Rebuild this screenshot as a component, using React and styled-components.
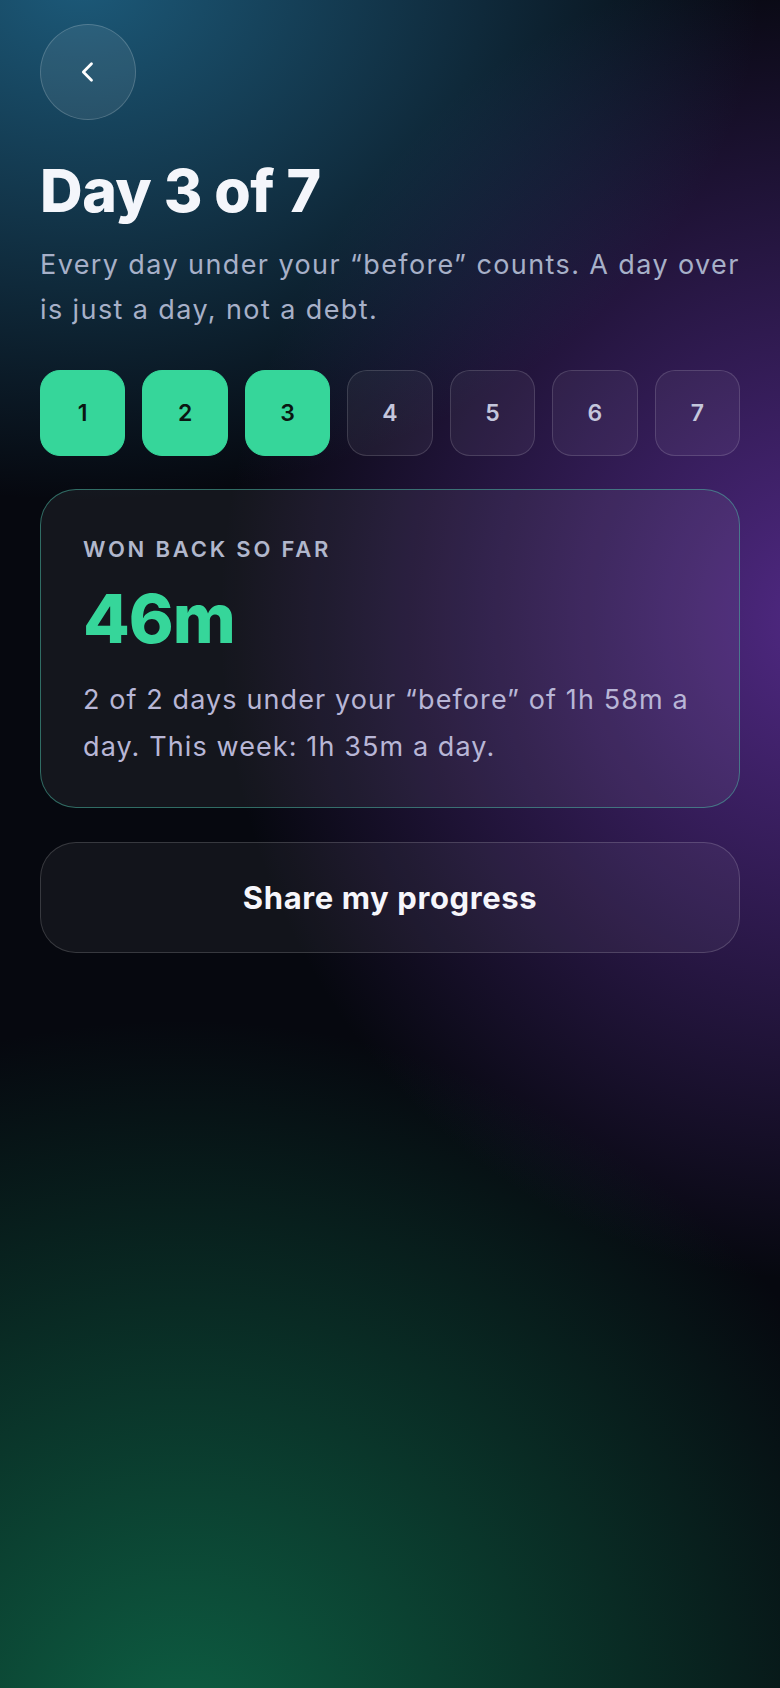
import React from 'react';
import styled, { createGlobalStyle } from 'styled-components';

const GlobalStyle = createGlobalStyle`
  html, body {
    margin: 0;
    padding: 0;
    background: #06080f;
  }
  * {
    box-sizing: border-box;
  }
`;

const Page = styled.div`
  position: relative;
  min-height: 1688px;
  width: 100%;
  padding: 24px 40px 40px;
  font-family: Inter, "Noto Sans", sans-serif;
  color: #fff;
  background:
    radial-gradient(ellipse 680px 520px at 80px -20px, rgba(32, 104, 140, 0.85), rgba(32, 104, 140, 0) 100%),
    radial-gradient(ellipse 600px 660px at 820px 620px, rgba(88, 44, 144, 0.9), rgba(88, 44, 144, 0) 100%),
    radial-gradient(ellipse 760px 720px at 180px 1740px, rgba(14, 100, 70, 0.95), rgba(14, 100, 70, 0) 100%),
    #06080f;
`;

const BackButton = styled.button`
  width: 96px;
  height: 96px;
  border-radius: 50%;
  border: 1.5px solid rgba(255, 255, 255, 0.18);
  background: rgba(255, 255, 255, 0.08);
  display: flex;
  align-items: center;
  justify-content: center;
  padding: 0;
  cursor: pointer;
`;

const Title = styled.h1`
  margin: 38px 0 0;
  font-size: 59px;
  font-weight: 800;
  letter-spacing: -0.5px;
  line-height: 66px;
  color: #f4f6fb;
`;

const Subtitle = styled.p`
  margin: 18px 0 0;
  font-size: 27px;
  letter-spacing: 1.4px;
  line-height: 45px;
  color: #a7b0c8;
  font-weight: 400;
`;

const Days = styled.div`
  display: grid;
  grid-template-columns: repeat(7, 1fr);
  gap: 17px;
  margin-top: 38px;
`;

const DayTile = styled.div`
  height: 86px;
  border-radius: 20px;
  display: flex;
  align-items: center;
  justify-content: center;
  font-size: 23px;
  font-weight: 600;
  background: ${(p) => (p.$done ? '#36d69a' : 'rgba(255, 255, 255, 0.05)')};
  border: 1.5px solid ${(p) => (p.$done ? '#36d69a' : 'rgba(255, 255, 255, 0.14)')};
  color: ${(p) => (p.$done ? '#0a1712' : '#c4c6dc')};
`;

const Card = styled.section`
  margin-top: 33px;
  height: 319px;
  border-radius: 36px;
  border: 1.5px solid rgba(72, 180, 160, 0.55);
  background: rgba(255, 255, 255, 0.06);
  padding: 46px 42px 42px;
`;

const Label = styled.div`
  font-size: 22px;
  font-weight: 600;
  letter-spacing: 2.8px;
  color: #b1b7cc;
`;

const Amount = styled.div`
  margin-top: 16px;
  font-size: 68px;
  font-weight: 800;
  letter-spacing: -1px;
  line-height: 80px;
  color: #36d69a;
`;

const Detail = styled.p`
  margin: 18px 0 0;
  font-size: 27px;
  letter-spacing: 1.1px;
  line-height: 47px;
  color: #b8b6d6;
`;

const ShareButton = styled.button`
  margin-top: 34px;
  width: 100%;
  height: 111px;
  border-radius: 36px;
  border: 1.5px solid rgba(255, 255, 255, 0.16);
  background: rgba(255, 255, 255, 0.05);
  color: #f6f6fb;
  font-family: Inter, "Noto Sans", sans-serif;
  font-size: 31px;
  letter-spacing: 0.6px;
  font-weight: 700;
  cursor: pointer;
`;

const days = [1, 2, 3, 4, 5, 6, 7];
const completed = 3;

export default function App() {
  return (
    <>
      <GlobalStyle />
      <Page>
        <BackButton aria-label="Back">
          <svg width="28" height="28" viewBox="0 0 24 24" fill="none" stroke="#fff" strokeWidth="2.4" strokeLinecap="round" strokeLinejoin="round">
            <path d="M15 5l-7 7 7 7" />
          </svg>
        </BackButton>
        <Title>Day 3 of 7</Title>
        <Subtitle>Every day under your “before” counts. A day over is just a day, not a debt.</Subtitle>
        <Days>
          {days.map((d) => (
            <DayTile key={d} $done={d <= completed}>{d}</DayTile>
          ))}
        </Days>
        <Card>
          <Label>WON BACK SO FAR</Label>
          <Amount>46m</Amount>
          <Detail>2 of 2 days under your “before” of 1h 58m a day. This week: 1h 35m a day.</Detail>
        </Card>
        <ShareButton>Share my progress</ShareButton>
      </Page>
    </>
  );
}
